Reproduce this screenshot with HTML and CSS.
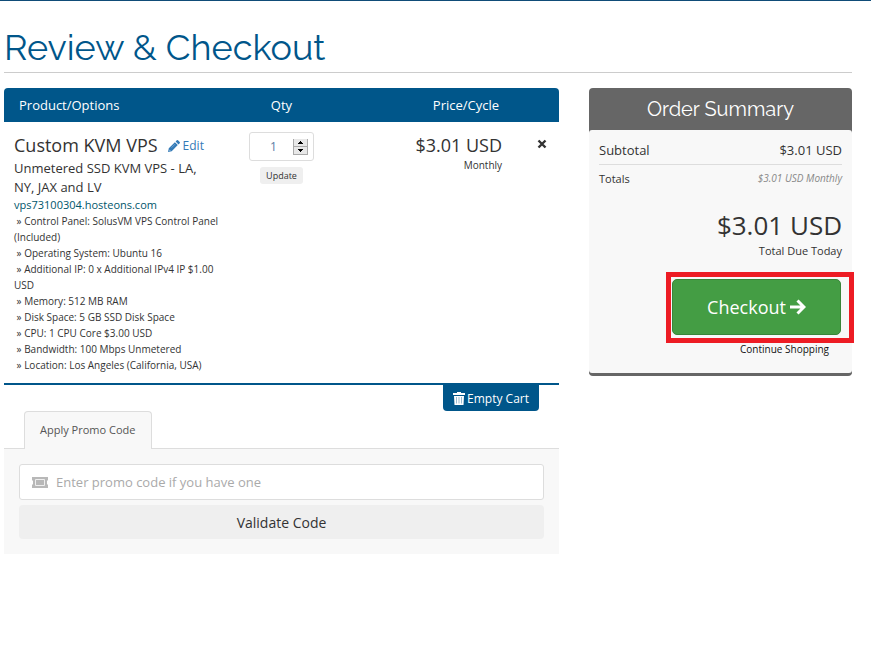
FILE: index.html
```
<!DOCTYPE html>
<html lang="en">
<head>
<meta charset="utf-8">
<title>Review &amp; Checkout</title>
<link rel="stylesheet" href="styles.css">
</head>
<body>
<main class="page">
  <h1 class="page-title">Review &amp; Checkout</h1>
  <div class="columns">
    <section class="cart">
      <table class="cart-table">
        <thead>
          <tr><th class="col-product">Product/Options</th><th class="col-qty">Qty</th><th class="col-price">Price/Cycle</th><th class="col-remove"></th></tr>
        </thead>
        <tbody>
          <tr>
            <td class="product">
              <div class="product-head">
                <span class="product-name">Custom KVM VPS</span>
                <a class="edit" href="#"><svg class="icon-pencil" viewBox="0 0 12 12"><path fill="currentColor" d="M0 12l.8-3.700L6.900 2.200l2.900 2.900-6.100 6.100zM7.600 1.500L8.800.3q.6-.6 1.200 0l1.700 1.700q.6.6 0 1.200l-1.200 1.200z"/><path d="M1.200 9.800l1 1" stroke="#fff" stroke-width=".7" fill="none"/><path d="M3.500 7.700l3.500-3.500" stroke="#fff" stroke-width=".3" fill="none"/></svg>Edit</a>
              </div>
              <div class="product-group">Unmetered SSD KVM VPS - LA, NY, JAX and LV</div>
              <div class="product-domain">vps73100304.hosteons.com</div>
              <ul class="options">
                <li>&nbsp;» Control Panel: SolusVM VPS Control Panel (Included)</li>
                <li>&nbsp;» Operating System: Ubuntu 16</li>
                <li>&nbsp;» Additional IP: 0 x Additional IPv4 IP $1.00 USD</li>
                <li>&nbsp;» Memory: 512 MB RAM</li>
                <li>&nbsp;» Disk Space: 5 GB SSD Disk Space</li>
                <li>&nbsp;» CPU: 1 CPU Core $3.00 USD</li>
                <li>&nbsp;» Bandwidth: 100 Mbps Unmetered</li>
                <li>&nbsp;» Location: Los Angeles (California, USA)</li>
              </ul>
            </td>
            <td class="qty">
              <div class="qty-box">
                <input class="qty-input" type="number" value="1" aria-label="Quantity">
                <span class="spinner">
                  <button type="button" aria-label="Increase"><svg viewBox="0 0 13 7"><path d="M4 5h5v-1h-1v-1h-1v-1h-1v1h-1v1h-1z"/></svg></button>
                  <button type="button" aria-label="Decrease"><svg viewBox="0 0 13 7"><path d="M4 2h5v1h-1v1h-1v1h-1v-1h-1v-1h-1z"/></svg></button>
                </span>
              </div>
              <button class="update" type="button">Update</button>
            </td>
            <td class="price"><div class="amount">$3.01 USD</div><div class="cycle">Monthly</div></td>
            <td class="remove"><button type="button" aria-label="Remove"><svg viewBox="0 0 10 10"><path d="M1.500 1.500l7 7M8.500 1.500l-7 7" stroke="#333" stroke-width="2.400"/></svg></button></td>
          </tr>
        </tbody>
      </table>
      <div class="empty-row">
        <button class="empty" type="button"><svg viewBox="0 0 12 13"><path fill="#fff" d="M4 0h4v1h4v2H0V1h4zM1 4h10l-.5 9h-9z"/><path d="M3.500 5v6.500M6 5v6.500M8.500 5v6.500" stroke="#00568a" stroke-width=".4"/></svg>Empty Cart</button>
      </div>
      <div class="tabs"><a class="tab" href="#promo">Apply Promo Code</a></div>
      <form class="promo" id="promo">
        <div class="promo-field">
          <svg class="icon-ticket" viewBox="0 0 16 11"><path fill="#b8b8b8" d="M0 0h16v3.500h-1v4h1V11H0V7.500h1v-4H0z"/><path d="M3.500 2.500h9v6h-9z" fill="none" stroke="#eee"/></svg>
          <input type="text" placeholder="Enter promo code if you have one" aria-label="Promo code">
        </div>
        <button class="validate" type="button">Validate Code</button>
      </form>
    </section>
    <aside class="summary">
      <h2>Order Summary</h2>
      <div class="summary-body">
        <div class="subtotal"><span>Subtotal</span><span>$3.01 USD</span></div>
        <div class="totals"><span>Totals</span><em>$3.01 USD Monthly</em></div>
        <div class="due">$3.01 USD</div>
        <div class="due-label">Total Due Today</div>
        <div class="checkout-wrap">
          <button class="checkout" type="button">Checkout<svg viewBox="0 0 16 16"><path d="M0 8h14M7.500 1.500L14 8l-6.500 6.500" fill="none" stroke="#fff" stroke-width="3"/></svg></button>
        </div>
        <a class="continue" href="#">Continue Shopping</a>
      </div>
    </aside>
  </div>
</main>
</body>
</html>
```
FILE: styles.css
```
* { box-sizing: border-box; }
body {
  margin: 0;
  border-top: 1px solid #0f4c78;
  background: #fff;
  color: #333;
  font-family: "Open Sans", "Noto Sans", sans-serif;
  font-size: 12px;
}
button, input { font-family: inherit; color: inherit; }
button { border: 0; padding: 0; cursor: pointer; }
a { text-decoration: none; }
svg { display: block; flex: none; }

.page { padding: 22px 19px 0 4px; }
.page-title {
  margin: 0 0 15px;
  padding-bottom: 1px;
  border-bottom: 1px solid #ccc;
  color: #00568a;
  font: 400 36px/48px Raleway, Lato, sans-serif;
}
.columns {
  display: grid;
  grid-template-columns: 555fr 263fr;
  gap: 30px;
  align-items: start;
}

.cart-table {
  width: 100%;
  table-layout: fixed;
  border-collapse: separate;
  border-spacing: 0;
  border-bottom: 2px solid #00568a;
}
.cart-table th {
  height: 34px;
  padding: 0 15px;
  background: #00568a;
  color: #fff;
  font-size: 13px;
  font-weight: 400;
}
.cart-table td { padding: 10px; vertical-align: top; }
.cart-table th.col-product { width: 40%; text-align: left; border-top-left-radius: 4px; }
.cart-table th.col-qty { width: 20%; text-align: center; }
.cart-table th.col-price { width: 31%; text-align: right; padding-right: 10px; }
.cart-table th.col-remove { width: 9%; border-top-right-radius: 4px; }
.cart-table td.product { padding-right: 4px; }
.product-head { display: flex; align-items: baseline; gap: 10px; line-height: 26px; white-space: nowrap; }
.product-name { font-size: 18px; }
.edit { display: flex; align-items: center; gap: 3px; color: #337ab7; font-size: 12px; }
.icon-pencil { width: 12px; height: 12px; }
.product-group { padding-right: 16px; font-size: 13px; line-height: 19px; }
.product-domain { color: #00566b; font-size: 11px; line-height: 16px; }
.options { margin: 0; padding: 0; list-style: none; font-size: 10px; line-height: 16px; }

.cart-table td.qty { text-align: center; }
.qty-box {
  display: flex;
  align-items: center;
  width: 65px;
  height: 29px;
  margin: 0 auto 6px;
  padding-right: 5px;
  border: 1px solid #ddd;
  border-radius: 3px;
}
.qty-input {
  flex: 1;
  min-width: 0;
  padding: 0 0 0 4px;
  border: 0;
  background: none;
  color: #5c7da5;
  font-size: 12px;
  text-align: center;
  appearance: textfield;
}
.qty-input::-webkit-inner-spin-button { appearance: none; margin: 0; }
.spinner { display: grid; width: 15px; }
.spinner button { height: 8px; background: #e8e8e8; border: 1px solid #aaa; border-top: 0; }
.spinner svg { width: 13px; height: 7px; }
.update {
  display: block;
  height: 17px;
  margin: 0 auto;
  padding: 0 6px;
  border-radius: 3px;
  background: #efefef;
  font-size: 9px;
}
.cart-table td.price { padding-right: 7px; text-align: right; }
.amount { font-size: 18px; line-height: 26px; }
.cycle { font-size: 10px; line-height: 14px; }
.cart-table td.remove { padding: 14px 0 0 28px; }
.remove button { background: none; }
.remove svg { width: 10px; height: 10px; }

.empty-row { display: flex; justify-content: flex-end; padding-right: 20px; }
.empty {
  display: flex;
  align-items: center;
  gap: 2px;
  height: 26px;
  padding: 0 10px;
  border-radius: 0 0 4px 4px;
  background: #00568a;
  color: #fff;
  font-size: 12px;
}
.empty svg { width: 12px; height: 13px; }
.tabs { display: flex; padding-left: 20px; border-bottom: 1px solid #ddd; }
.tab {
  margin-bottom: -1px;
  padding: 0 16px 1px 15px;
  border: 1px solid #ddd;
  border-bottom: 0;
  border-radius: 4px 4px 0 0;
  background: #f8f8f8;
  color: #555;
  font-size: 11px;
  line-height: 36px;
}
.promo { padding: 15px; background: #f8f8f8; }
.promo-field {
  display: flex;
  align-items: center;
  gap: 8px;
  height: 36px;
  margin-bottom: 5px;
  padding: 0 12px;
  border: 1px solid #ddd;
  border-radius: 3px;
  background: #fff;
}
.promo-field input { flex: 1; min-width: 0; padding: 0; border: 0; outline: 0; background: none; font-size: 13px; }
.promo-field input::placeholder { color: #aaa; }
.icon-ticket { width: 16px; height: 11px; }
.validate { display: block; width: 100%; height: 34px; border-radius: 4px; background: #efefef; font-size: 14px; }

.summary { border-bottom: 3px solid #666; border-radius: 4px; background: #666; }
.summary h2 {
  margin: 0;
  color: #fff;
  font: 400 20px/42px Raleway, Lato, sans-serif;
  text-align: center;
}
.summary-body { padding: 8px 10px 17px; border-radius: 3px; background: #f8f8f8; text-align: right; }
.subtotal, .totals { display: flex; justify-content: space-between; }
.subtotal { padding-bottom: 2px; border-bottom: 1px solid #ddd; font-size: 13px; line-height: 24px; }
.totals { font-size: 11px; line-height: 28px; }
.totals em { color: #888; font-size: 10px; line-height: 26px; }
.due { padding-top: 14px; font-size: 26px; line-height: 36px; }
.due-label { font-size: 11px; line-height: 16px; }
.checkout-wrap {
  width: 188px;
  margin: 13px -12px 0 auto;
  padding: 2px 8px 3px 1px;
  border: 5px solid #ed1c24;
}
.checkout {
  display: flex;
  align-items: center;
  justify-content: center;
  gap: 4px;
  width: 100%;
  height: 56px;
  border: 1px solid #398439;
  border-radius: 5px;
  background: #449d44;
  color: #fff;
  font-size: 18px;
}
.checkout svg { width: 16px; height: 16px; }
.continue { display: block; margin-right: 13px; color: #111; font-size: 10px; line-height: 13px; }
```
